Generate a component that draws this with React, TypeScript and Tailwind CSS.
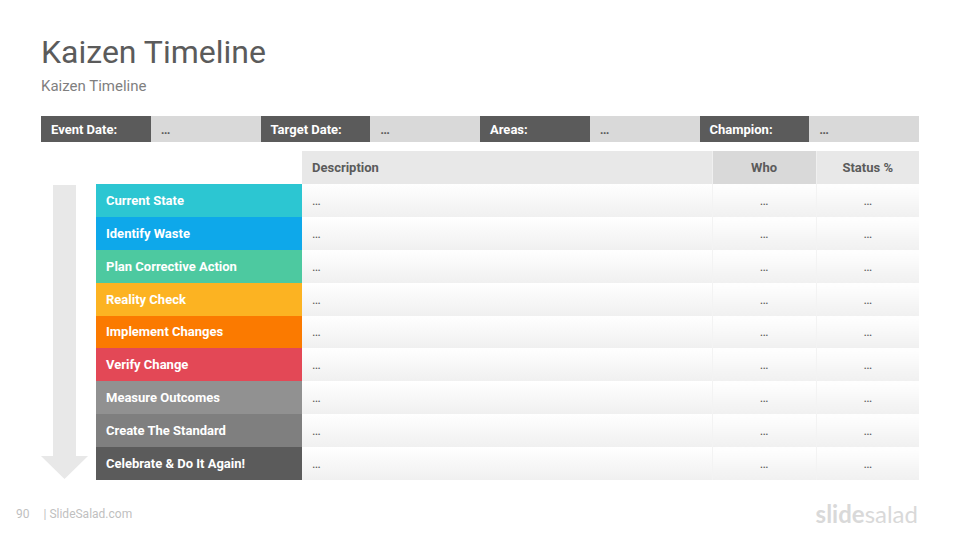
import React from 'react'
import clsx from 'clsx'

const details = ['Event Date:', 'Target Date:', 'Areas:', 'Champion:']

const stages = [
  { name: 'Current State', color: 'bg-[#2cc6d2]' },
  { name: 'Identify Waste', color: 'bg-[#0ea8ea]' },
  { name: 'Plan Corrective Action', color: 'bg-[#4dc9a0]' },
  { name: 'Reality Check', color: 'bg-[#fcb322]' },
  { name: 'Implement Changes', color: 'bg-[#fb7a00]' },
  { name: 'Verify Change', color: 'bg-[#e34856]' },
  { name: 'Measure Outcomes', color: 'bg-[#919191]' },
  { name: 'Create The Standard', color: 'bg-[#7f7f7f]' },
  { name: 'Celebrate & Do It Again!', color: 'bg-[#5b5b5b]' },
]

function DetailsBar() {
  return (
    <dl className="mt-5 grid grid-cols-8 text-[13px] leading-[18px] font-bold">
      {details.map((label) => (
        <React.Fragment key={label}>
          <dt className="bg-[#5b5b5b] px-2.5 pt-[5px] pb-[3px] text-white">{label}</dt>
          <dd className="bg-[#d9d9d9] px-2.5 pt-[5px] pb-[3px]">…</dd>
        </React.Fragment>
      ))}
    </dl>
  )
}

function DownArrow() {
  return (
    <svg className="mt-[34px] h-[294px] w-[47px] shrink-0" viewBox="0 0 47 294" fill="#e8e8e8" aria-hidden="true">
      <path d="M12 0h23v271h12L23.5 294 0 271h12z" />
    </svg>
  )
}

function StageTable() {
  return (
    <table className="h-[329px] w-full table-fixed border-collapse text-[13px] leading-[17px]">
      <colgroup>
        <col className="w-[206px]" />
        <col />
        <col className="w-[104px]" />
        <col className="w-[103px]" />
      </colgroup>
      <thead>
        <tr className="h-[33px] font-bold">
          <td />
          <th scope="col" className="bg-[#e8e8e8] px-2.5 text-left">Description</th>
          <th scope="col" className="border-x border-[#f0f0f0] bg-[#d9d9d9]">Who</th>
          <th scope="col" className="bg-[#e8e8e8]">Status %</th>
        </tr>
      </thead>
      <tbody>
        {stages.map((stage) => (
          <tr key={stage.name}>
            <th scope="row" className={clsx('px-2.5 text-left font-bold text-white', stage.color)}>
              {stage.name}
            </th>
            <td className="bg-linear-to-b from-white to-[#f0f0f0] px-2.5">…</td>
            <td className="border-x border-[#f3f3f3] bg-linear-to-b from-white to-[#f0f0f0] text-center">…</td>
            <td className="bg-linear-to-b from-white to-[#f0f0f0] text-center">…</td>
          </tr>
        ))}
      </tbody>
    </table>
  )
}

export default function App() {
  return (
    <div className="flex min-h-screen flex-col bg-white font-['Roboto',sans-serif] text-[#5b5b5b]">
      <main className="px-[41px] pt-8">
        <h1 className="text-[32px] leading-10">Kaizen Timeline</h1>
        <p className="mt-1 text-[15px] leading-5 text-[#7f7f7f]">Kaizen Timeline</p>
        <DetailsBar />
        <div className="mt-[9px] flex gap-2">
          <DownArrow />
          <StageTable />
        </div>
      </main>
      <footer className="mt-auto flex items-center justify-between pr-[42px] pb-2.5 pl-4 text-[#bfbfbf]">
        <p className="flex gap-3.5 text-[12px] leading-4">
          <span>90</span>
          <span>| SlideSalad.com</span>
        </p>
        <p className="font-['Lato',sans-serif] text-2xl text-[#d9d9d9]">
          <span className="font-bold">slide</span>salad
        </p>
      </footer>
    </div>
  )
}
